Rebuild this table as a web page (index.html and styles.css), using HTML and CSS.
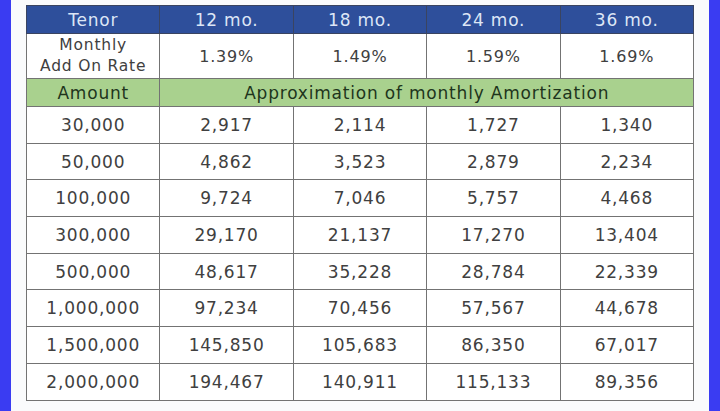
FILE: index.html
```html
<!DOCTYPE html>
<html>
<head>
<meta charset="utf-8">
<link rel="stylesheet" href="styles.css">
</head>
<body>
<div class="frame">
  <div class="bar"></div>
  <main class="sheet">
    <table class="rates">
      <colgroup>
        <col class="c"><col class="c"><col class="c"><col class="c"><col class="c">
      </colgroup>
      <tr class="head">
        <th>Tenor</th><th>12 mo.</th><th>18 mo.</th><th>24 mo.</th><th>36 mo.</th>
      </tr>
      <tr class="rate">
        <td class="label">Monthly<br>Add On Rate</td><td>1.39%</td><td>1.49%</td><td>1.59%</td><td>1.69%</td>
      </tr>
      <tr class="sub">
        <td>Amount</td><td colspan="4">Approximation of monthly Amortization</td>
      </tr>
      <tr class="row"><td>30,000</td><td>2,917</td><td>2,114</td><td>1,727</td><td>1,340</td></tr>
      <tr class="row"><td>50,000</td><td>4,862</td><td>3,523</td><td>2,879</td><td>2,234</td></tr>
      <tr class="row"><td>100,000</td><td>9,724</td><td>7,046</td><td>5,757</td><td>4,468</td></tr>
      <tr class="row"><td>300,000</td><td>29,170</td><td>21,137</td><td>17,270</td><td>13,404</td></tr>
      <tr class="row"><td>500,000</td><td>48,617</td><td>35,228</td><td>28,784</td><td>22,339</td></tr>
      <tr class="row"><td>1,000,000</td><td>97,234</td><td>70,456</td><td>57,567</td><td>44,678</td></tr>
      <tr class="row"><td>1,500,000</td><td>145,850</td><td>105,683</td><td>86,350</td><td>67,017</td></tr>
      <tr class="row"><td>2,000,000</td><td>194,467</td><td>140,911</td><td>115,133</td><td>89,356</td></tr>
    </table>
  </main>
  <div class="bar bar-right"></div>
</div>
</body>
</html>
```

FILE: styles.css
```css
html, body {
  margin: 0;
  padding: 0;
}
body {
  width: 720px;
  height: 411px;
  overflow: hidden;
  background: #fafbfc;
  font-family: "DejaVu Sans", "Liberation Sans", sans-serif;
}
.frame {
  display: flex;
  height: 411px;
}
.bar {
  width: 11px;
  flex: none;
  background: #3a3cf2;
}
.bar-right {
  width: 12px;
}
.sheet {
  flex: 1;
  padding: 5px 15px 0 15px;
  box-sizing: border-box;
}
.rates {
  width: 668px;
  border-collapse: collapse;
  table-layout: fixed;
  color: #404040;
  font-size: 17px;
  letter-spacing: 0.8px;
  background: #ffffff;
}
.rates col.c {
  width: 20%;
}
.rates th,
.rates td {
  border: 1px solid #737373;
  text-align: center;
  padding: 0;
  font-weight: normal;
}
.head th {
  height: 27px;
  background: #2e4f9b;
  color: #dde6f6;
  border-color: #3a4460;
  font-size: 17px;
}
.rate td {
  height: 44px;
  font-size: 16px;
}
.rate td.label {
  font-size: 15.5px;
  line-height: 21px;
}
.sub td {
  height: 27px;
  background: #a9d18e;
  color: #1e351c;
  font-size: 17px;
}
.row td {
  height: 35.7px;
  font-size: 17px;
}
```
